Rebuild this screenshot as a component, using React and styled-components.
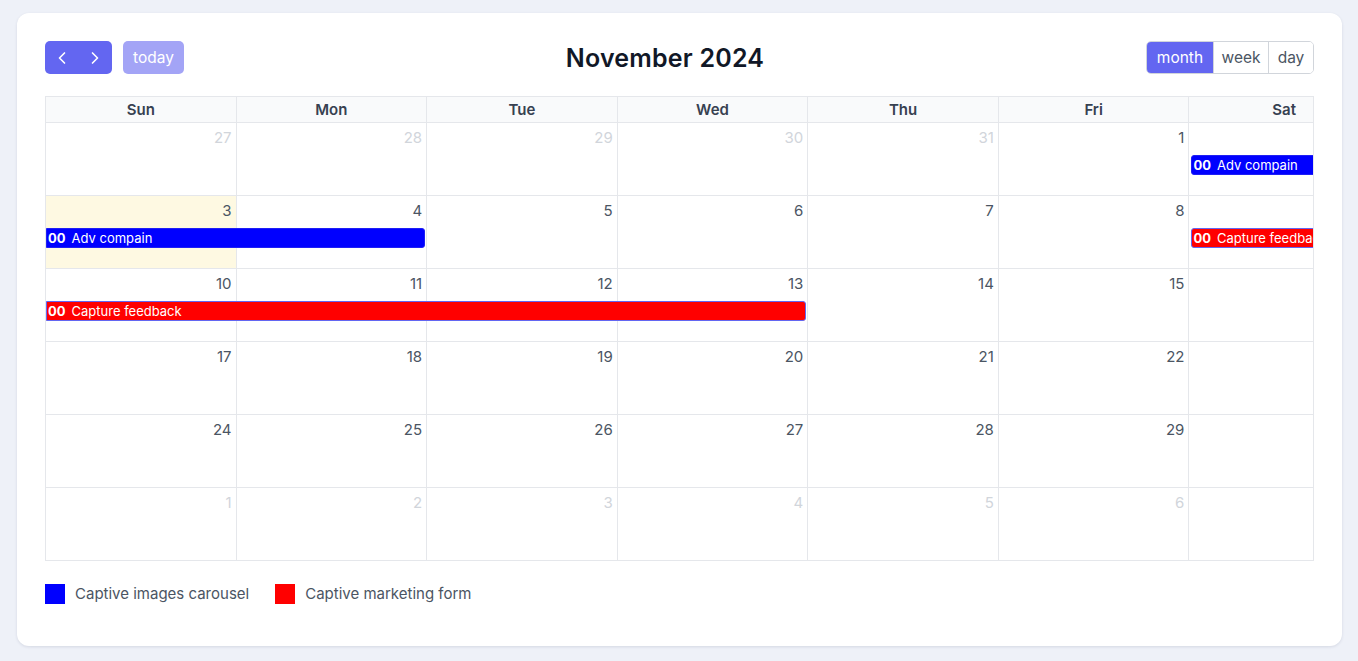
import React from "react";
import styled, { createGlobalStyle } from "styled-components";
import { ChevronLeft, ChevronRight } from "lucide-react";

const Global = createGlobalStyle`
  html, body { margin: 0; padding: 0; background: #eef1f8; }
  body { font-family: Inter, "Noto Sans", sans-serif; }
  * { box-sizing: border-box; }
`;

const Page = styled.div`
  padding: 13px 16px 15px 17px;
`;

const Card = styled.div`
  background: #fff;
  border-radius: 12px;
  box-shadow: 0 1px 3px rgba(30, 41, 80, 0.12);
  padding: 28px 28px 42px;
`;

const Toolbar = styled.div`
  display: flex;
  align-items: center;
  justify-content: space-between;
  height: 33px;
  margin-bottom: 22px;
`;

const LeftGroup = styled.div`
  display: flex;
  gap: 11px;
`;

const NavGroup = styled.div`
  display: flex;
  background: #6366f1;
  border-radius: 5px;
  overflow: hidden;
`;

const NavButton = styled.button`
  width: 33.5px;
  height: 33px;
  border: 0;
  background: transparent;
  color: #fff;
  display: flex;
  align-items: center;
  justify-content: center;
  padding: 0;
`;

const TodayButton = styled.button`
  height: 33px;
  width: 61px;
  border: 0;
  border-radius: 5px;
  background: #a3a4f6;
  color: #fff;
  font: 400 15.5px Inter, "Noto Sans", sans-serif;
  padding: 0;
`;

const Title = styled.h2`
  margin: 0;
  font: 600 25px Inter, "Noto Sans", sans-serif;
  color: #111827;
  letter-spacing: 0.2px;
`;

const ViewGroup = styled.div`
  display: flex;
  height: 33px;
  border-radius: 5px;
  overflow: hidden;
  border: 1px solid #d1d5db;
`;

const ViewButton = styled.button`
  width: ${(p) => p.$w}px;
  height: 100%;
  border: 0;
  border-left: ${(p) => (p.$first ? "0" : "1px solid #d1d5db")};
  background: ${(p) => (p.$active ? "#6366f1" : "#fff")};
  color: ${(p) => (p.$active ? "#fff" : "#4b5563")};
  font: 400 15.5px Inter, "Noto Sans", sans-serif;
  padding: 0;
`;

const Table = styled.div`
  border: 1px solid #e5e7eb;
  overflow: hidden;
`;

const Inner = styled.div`
  width: 1334px;
`;

const HeadRow = styled.div`
  display: grid;
  grid-template-columns: repeat(7, 1fr);
  height: 26px;
  border-bottom: 1px solid #e5e7eb;
  background: #f9fafb;
`;

const HeadCell = styled.div`
  border-right: 1px solid #e5e7eb;
  display: flex;
  align-items: center;
  justify-content: center;
  font: 600 15px Inter, "Noto Sans", sans-serif;
  color: #374151;
`;

const Week = styled.div`
  display: grid;
  grid-template-columns: repeat(7, 1fr);
  grid-template-rows: 32px 20px 1fr;
  height: 72px;
  box-sizing: content-box;
  &:not(:last-child) {
    border-bottom: 1px solid #e5e7eb;
  }
`;

const DayCell = styled.div`
  grid-row: 1 / -1;
  grid-column: ${(p) => p.$col};
  border-right: 1px solid #e5e7eb;
  background: ${(p) => (p.$today ? "#fef9e2" : "transparent")};
  text-align: right;
  padding: 4px 4px 0 0;
`;

const DayNum = styled.span`
  font: 400 15px/22px Inter, "Noto Sans", sans-serif;
  color: ${(p) => (p.$muted ? "#d1d5db" : "#4b5563")};
`;

const Event = styled.div`
  grid-row: 2;
  grid-column: ${(p) => p.$start} / span ${(p) => p.$span};
  z-index: 1;
  height: 20px;
  margin-left: ${(p) => (p.$isStart ? "2px" : "0")};
  margin-right: 2px;
  background: ${(p) => p.$color};
  border: 1px solid ${(p) => p.$border};
  border-radius: ${(p) => (p.$isStart ? "3px" : "0 3px 3px 0")};
  color: #fff;
  font: 400 13px/18px Inter, "Noto Sans", sans-serif;
  white-space: nowrap;
  overflow: hidden;
  padding-left: 1px;
  display: flex;
  gap: 6px;
`;

const EventTime = styled.b`
  font-weight: 700;
`;

const Legend = styled.div`
  display: flex;
  align-items: center;
  gap: 26px;
  margin-top: 23px;
`;

const LegendItem = styled.div`
  display: flex;
  align-items: center;
  gap: 10px;
  font: 400 15px/20px Inter, "Noto Sans", sans-serif;
  color: #4b5563;
`;

const Swatch = styled.span`
  width: 20px;
  height: 20px;
  background: ${(p) => p.$color};
`;

const heads = ["Sun", "Mon", "Tue", "Wed", "Thu", "Fri", "Sat"];

// The Saturday column is clipped by the table edge, so its numbers are not shown.
const weeks = [
  { days: [27, 28, 29, 30, 31, 1, null], muted: [0, 1, 2, 3, 4] },
  { days: [3, 4, 5, 6, 7, 8, null], muted: [], today: 0 },
  { days: [10, 11, 12, 13, 14, 15, null], muted: [] },
  { days: [17, 18, 19, 20, 21, 22, null], muted: [] },
  { days: [24, 25, 26, 27, 28, 29, null], muted: [] },
  { days: [1, 2, 3, 4, 5, 6, null], muted: [0, 1, 2, 3, 4, 5, 6] },
];

const BLUE = { color: "#0000ff", border: "#1f1ff5", title: "Adv compain" };
const RED = { color: "#ff0000", border: "#6366f1", title: "Capture feedback" };

const events = [
  [{ ...BLUE, start: 7, span: 1, isStart: true }],
  [
    { ...BLUE, start: 1, span: 2, isStart: false },
    { ...RED, start: 7, span: 1, isStart: true },
  ],
  [{ ...RED, start: 1, span: 4, isStart: false }],
  [],
  [],
  [],
];

export default function App() {
  return (
    <>
      <Global />
      <Page>
        <Card>
          <Toolbar>
            <LeftGroup>
              <NavGroup>
                <NavButton aria-label="prev">
                  <ChevronLeft size={20} strokeWidth={2} />
                </NavButton>
                <NavButton aria-label="next">
                  <ChevronRight size={20} strokeWidth={2} />
                </NavButton>
              </NavGroup>
              <TodayButton>today</TodayButton>
            </LeftGroup>
            <Title>November 2024</Title>
            <ViewGroup>
              <ViewButton $w={66} $first $active>
                month
              </ViewButton>
              <ViewButton $w={55}>week</ViewButton>
              <ViewButton $w={45}>day</ViewButton>
            </ViewGroup>
          </Toolbar>
          <Table>
            <Inner>
              <HeadRow>
                {heads.map((h) => (
                  <HeadCell key={h}>{h}</HeadCell>
                ))}
              </HeadRow>
              {weeks.map((w, wi) => (
                <Week key={wi}>
                  {w.days.map((d, di) => (
                    <DayCell key={di} $col={di + 1} $today={w.today === di}>
                      {d !== null && (
                        <DayNum $muted={w.muted.includes(di)}>{d}</DayNum>
                      )}
                    </DayCell>
                  ))}
                  {events[wi].map((e, ei) => (
                    <Event
                      key={ei}
                      $start={e.start}
                      $span={e.span}
                      $isStart={e.isStart}
                      $color={e.color}
                      $border={e.border}
                    >
                      <EventTime>00</EventTime>
                      <span>{e.title}</span>
                    </Event>
                  ))}
                </Week>
              ))}
            </Inner>
          </Table>
          <Legend>
            <LegendItem>
              <Swatch $color="#0000ff" />
              Captive images carousel
            </LegendItem>
            <LegendItem>
              <Swatch $color="#ff0000" />
              Captive marketing form
            </LegendItem>
          </Legend>
        </Card>
      </Page>
    </>
  );
}
